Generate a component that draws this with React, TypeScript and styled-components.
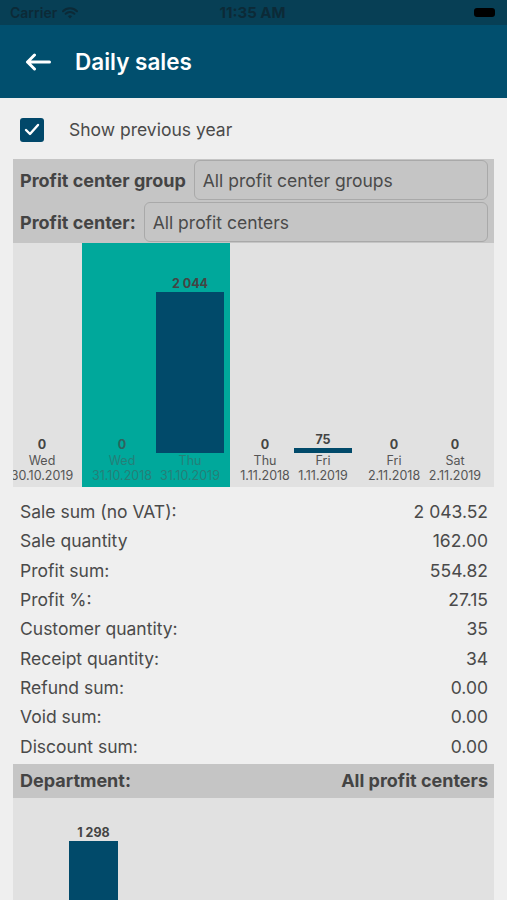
import React from 'react';
import styled, { createGlobalStyle } from 'styled-components';

type DayColumn = {
  value: string;
  day: string;
  date: string;
  width: number;
  padLeft?: number;
  padRight?: number;
  barHeight?: number;
  highlight?: boolean;
};

type StatRow = {
  label: string;
  value: string;
};

const GlobalStyle = createGlobalStyle`
  body {
    margin: 0;
    background: #efefef;
    font-family: Inter, "Noto Sans", sans-serif;
    color: #444;
  }
`;

const Page = styled.div`
  width: 507px;
  display: flex;
  flex-direction: column;
  background: #efefef;
`;

const StatusBar = styled.div`
  height: 25px;
  background: #073f55;
  display: grid;
  grid-template-columns: 1fr auto 1fr;
  align-items: center;
  padding: 0 12px 0 10px;
  color: #0c2a37;
  font-size: 14px;
  font-weight: 600;
`;

const Carrier = styled.div`
  display: flex;
  align-items: center;
  gap: 5px;
`;

const Clock = styled.div`
  font-size: 15px;
  font-weight: 700;
`;

const Battery = styled.div`
  justify-self: end;
  width: 21px;
  height: 9px;
  border-radius: 3px;
  background: #000;
`;

const Header = styled.header`
  height: 73px;
  background: #014f6e;
  display: flex;
  align-items: center;
  padding-left: 25px;
  gap: 24px;
`;

const Title = styled.h1`
  margin: 0;
  color: #fff;
  font-size: 22.5px;
  font-weight: 600;
`;

const CheckRow = styled.label`
  height: 61px;
  display: flex;
  align-items: center;
  padding: 2px 0 0 20px;
  box-sizing: border-box;
  gap: 25px;
  font-size: 17.5px;
  color: #4a4a4a;
`;

const CheckBox = styled.span`
  width: 24px;
  height: 24px;
  border-radius: 3px;
  background: #01486a;
  display: flex;
  align-items: center;
  justify-content: center;
`;

const FilterPanel = styled.div`
  margin: 0 13px;
  background: #c5c5c5;
  padding: 1px 6px 1px 7px;
  display: flex;
  flex-direction: column;
  gap: 2px;
`;

const FilterRow = styled.div`
  display: flex;
  align-items: center;
  gap: 8px;
  height: 40px;
`;

const FilterLabel = styled.span`
  font-size: 18px;
  font-weight: 700;
  color: #444;
  white-space: nowrap;
`;

const Select = styled.div`
  flex: 1;
  height: 100%;
  box-sizing: border-box;
  border: 1px solid #a9a9a9;
  border-radius: 6px;
  display: flex;
  align-items: center;
  padding-left: 8px;
  font-size: 17.5px;
  color: #4a4a4a;
`;

const Chart = styled.div`
  margin: 0 13px;
  height: 244px;
  background: #e1e1e1;
  overflow: hidden;
`;

const ChartRow = styled.div`
  display: flex;
  height: 100%;
  margin-left: -11px;
`;

const Column = styled.div<{ $w: number; $pl: number; $pr: number; $hl?: boolean }>`
  flex: 0 0 ${(p) => p.$w}px;
  box-sizing: border-box;
  padding: 0 ${(p) => p.$pr}px 4px ${(p) => p.$pl}px;
  background: ${(p) => (p.$hl ? '#00a89b' : 'transparent')};
  display: flex;
  flex-direction: column;
  justify-content: flex-end;
  align-items: center;
  white-space: nowrap;
  font-size: 12.5px;
  line-height: 15px;
  color: ${(p) => (p.$hl ? '#257f78' : '#555')};
`;

const BarValue = styled.span<{ $hl?: boolean }>`
  font-weight: 700;
  font-size: 12.5px;
  line-height: 14px;
  color: ${(p) => (p.$hl ? '#2f625e' : '#444')};
  margin-bottom: 1px;
`;

const Bar = styled.div<{ $h: number }>`
  align-self: stretch;
  height: ${(p) => p.$h}px;
  background: #014a6a;
`;

const Stats = styled.div`
  padding: 10px 19px 3px 20px;
  display: flex;
  flex-direction: column;
`;

const Stat = styled.div`
  height: 29.3px;
  display: flex;
  align-items: center;
  justify-content: space-between;
  font-size: 17.5px;
  color: #4a4a4a;
`;

const DepartmentBar = styled.div`
  margin: 0 13px;
  height: 34px;
  background: #c5c5c5;
  display: flex;
  align-items: center;
  justify-content: space-between;
  padding: 0 6px 0 7px;
  font-size: 18px;
  font-weight: 700;
  color: #444;
`;

const DepartmentChart = styled.div`
  margin: 0 13px;
  height: 240px;
  background: #e1e1e1;
  padding: 28px 0 0 56px;
  display: flex;
  align-items: flex-start;
`;

const DepartmentColumn = styled.div`
  width: 49px;
  display: flex;
  flex-direction: column;
  align-items: center;
`;

const columns: DayColumn[] = [
  { value: '0', day: 'Wed', date: '30.10.2019', width: 80 },
  { value: '0', day: 'Wed', date: '31.10.2018', width: 74, padLeft: 6, highlight: true },
  { value: '2 044', day: 'Thu', date: '31.10.2019', width: 74, padRight: 6, barHeight: 161, highlight: true },
  { value: '0', day: 'Thu', date: '1.11.2018', width: 64, padLeft: 6 },
  { value: '75', day: 'Fri', date: '1.11.2019', width: 65, padRight: 7, barHeight: 5 },
  { value: '0', day: 'Fri', date: '2.11.2018', width: 66, padLeft: 4 },
  { value: '0', day: 'Sat', date: '2.11.2019', width: 60 },
];

const stats: StatRow[] = [
  { label: 'Sale sum (no VAT):', value: '2 043.52' },
  { label: 'Sale quantity', value: '162.00' },
  { label: 'Profit sum:', value: '554.82' },
  { label: 'Profit %:', value: '27.15' },
  { label: 'Customer quantity:', value: '35' },
  { label: 'Receipt quantity:', value: '34' },
  { label: 'Refund sum:', value: '0.00' },
  { label: 'Void sum:', value: '0.00' },
  { label: 'Discount sum:', value: '0.00' },
];

const WifiIcon = () => (
  <svg width="16" height="12" viewBox="0 0 16 12">
    <path d="M1 4.2a10 10 0 0 1 14 0" fill="none" stroke="#0c2a37" strokeWidth="2" strokeLinecap="round" />
    <path d="M3.6 6.8a6.3 6.3 0 0 1 8.8 0" fill="none" stroke="#0c2a37" strokeWidth="2" strokeLinecap="round" />
    <path d="M8 11.5 5.9 9.3a3 3 0 0 1 4.2 0z" fill="#0c2a37" />
  </svg>
);

const BackArrow = () => (
  <svg width="26" height="18" viewBox="0 0 26 18">
    <path d="M24.5 9H2.5M9.5 2 2.5 9l7 7" fill="none" stroke="#fff" strokeWidth="3" strokeLinecap="round" strokeLinejoin="round" />
  </svg>
);

export default function App() {
  return (
    <Page>
      <GlobalStyle />
      <StatusBar>
        <Carrier>
          Carrier <WifiIcon />
        </Carrier>
        <Clock>11:35 AM</Clock>
        <Battery />
      </StatusBar>
      <Header>
        <BackArrow />
        <Title>Daily sales</Title>
      </Header>

      <CheckRow>
        <CheckBox>
          <svg width="16" height="13" viewBox="0 0 16 13">
            <path d="M2 7l4 4 8-9" fill="none" stroke="#fff" strokeWidth="2.4" strokeLinecap="round" strokeLinejoin="round" />
          </svg>
        </CheckBox>
        Show previous year
      </CheckRow>

      <FilterPanel>
        <FilterRow>
          <FilterLabel>Profit center group</FilterLabel>
          <Select>All profit center groups</Select>
        </FilterRow>
        <FilterRow>
          <FilterLabel>Profit center:</FilterLabel>
          <Select>All profit centers</Select>
        </FilterRow>
      </FilterPanel>

      <Chart>
        <ChartRow>
          {columns.map((c) => (
            <Column
              key={c.date}
              $w={c.width}
              $pl={c.padLeft ?? 0}
              $pr={c.padRight ?? 0}
              $hl={c.highlight}
            >
              <BarValue $hl={c.highlight && !c.barHeight}>{c.value}</BarValue>
              {c.barHeight && <Bar $h={c.barHeight} />}
              <span>{c.day}</span>
              <span>{c.date}</span>
            </Column>
          ))}
        </ChartRow>
      </Chart>

      <Stats>
        {stats.map((s) => (
          <Stat key={s.label}>
            <span>{s.label}</span>
            <span>{s.value}</span>
          </Stat>
        ))}
      </Stats>

      <DepartmentBar>
        <span>Department:</span>
        <span>All profit centers</span>
      </DepartmentBar>
      <DepartmentChart>
        <DepartmentColumn>
          <BarValue>1 298</BarValue>
          <Bar $h={180} />
        </DepartmentColumn>
      </DepartmentChart>
    </Page>
  );
}
